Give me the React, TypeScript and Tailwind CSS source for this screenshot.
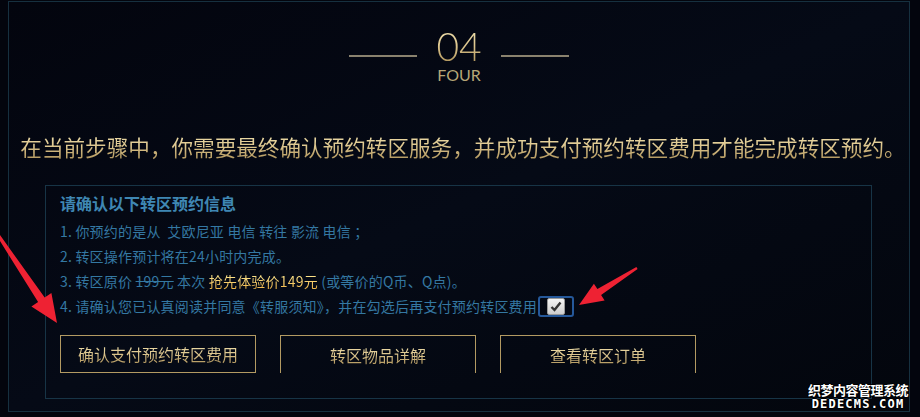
function arrow(x1: number, y1: number, x2: number, y2: number, tail: number, shaft: number, headLen: number, headW: number) {
  const dx = x2 - x1;
  const dy = y2 - y1;
  const len = Math.hypot(dx, dy);
  const ux = dx / len;
  const uy = dy / len;
  const px = -uy;
  const py = ux;
  const bx = x2 - ux * headLen;
  const by = y2 - uy * headLen;
  const pts = [
    [x1 + px * tail, y1 + py * tail],
    [bx + px * shaft, by + py * shaft],
    [bx + px * headW, by + py * headW],
    [x2, y2],
    [bx - px * headW, by - py * headW],
    [bx - px * shaft, by - py * shaft],
    [x1 - px * tail, y1 - py * tail],
  ];
  return pts.map((p) => `${p[0].toFixed(1)},${p[1].toFixed(1)}`).join(" ");
}

const gold = "bg-gradient-to-b from-[#f3e6b4] via-[#dcc58d] to-[#a98d54] bg-clip-text text-transparent";

export default function App() {
  return (
    <div
      className="relative w-[920px] h-[417px] overflow-hidden bg-[#03050d]"
      style={{ fontFamily: '"Noto Sans CJK SC", "Noto Sans", sans-serif' }}
    >
      <div className="ml-[8px] mt-[1px] w-[902px] h-[411px] border border-[#16303f] bg-gradient-to-br from-[#03050e] via-[#050a16] to-[#03060d]">
        {/* step heading */}
        <div className="flex justify-center items-start gap-[19px] pt-[24px]">
          <div className="w-[68px] h-[2px] bg-[#8a826e] mt-[29px]" />
          <div className="flex flex-col items-center">
            <div className={`text-[39px] leading-[40px] font-light ${gold}`} style={{ fontFamily: "Lato, sans-serif" }}>
              04
            </div>
            <div className="text-[16px] leading-[18px] text-[#b6a677]" style={{ fontFamily: "Lato, sans-serif" }}>
              FOUR
            </div>
          </div>
          <div className="w-[68px] h-[2px] bg-[#8a826e] mt-[29px]" />
        </div>

        <div className="mt-[48px] pl-[8px] text-center whitespace-nowrap">
          <span className={`text-[21.6px] leading-[30px] ${gold}`}>
            在当前步骤中，你需要最终确认预约转区服务，并成功支付预约转区费用才能完成转区预约。
          </span>
        </div>

        {/* info box */}
        <div className="ml-[36px] mt-[23px] w-[827px] h-[214px] border border-[#173446] pl-[14px] pt-[5px]">
          <div className="text-[16px] leading-[24px] font-bold text-[#3f87b3]">请确认以下转区预约信息</div>
          <div className="mt-[4px] text-[14px] leading-[25px] tracking-[0.2px] text-[#3478a2]">
            <div>1. 你预约的是从&nbsp;&nbsp;艾欧尼亚 电信 转往 影流 电信 ；</div>
            <div>2. 转区操作预计将在24小时内完成。</div>
            <div>
              3. 转区原价 <span className="line-through">199元</span> 本次{" "}
              <span className="bg-gradient-to-b from-[#fff3a0] to-[#f0b13c] bg-clip-text text-transparent">抢先体验价149元</span>{" "}
              (或等价的Q币、Q点)。
            </div>
            <div className="flex items-center">
              <span>4. 请确认您已认真阅读并同意《转服须知》，并在勾选后再支付预约转区费用</span>
              <span className="ml-[1px] inline-flex items-center justify-center w-[36px] h-[21px] border-2 border-[#25589a] rounded-[3px]">
                <span className="flex items-center justify-center w-[18px] h-[17px] rounded-[2px] bg-gradient-to-b from-[#f4f4f4] to-[#cfcfcf] border border-[#9a9a9a]">
                  <svg width="12" height="11" viewBox="0 0 12 11">
                    <path d="M1.5 6 L4.5 9 L10.5 1.5" fill="none" stroke="#333" strokeWidth="2.4" />
                  </svg>
                </span>
              </span>
            </div>
          </div>

          <div className="mt-[16px] flex gap-[24px]">
            <div className="w-[196px] h-[38px] border border-[#b39a62] flex items-center justify-center">
              <span className={`text-[16px] ${gold}`}>确认支付预约转区费用</span>
            </div>
            <div className="w-[196px] h-[38px] border-t border-x border-[#b39a62] flex items-center justify-center">
              <span className={`text-[16px] ${gold}`}>转区物品详解</span>
            </div>
            <div className="w-[196px] h-[38px] border-t border-x border-[#b39a62] flex items-center justify-center">
              <span className={`text-[16px] ${gold}`}>查看转区订单</span>
            </div>
          </div>
        </div>
      </div>

      {/* red arrows */}
      <svg className="absolute left-0 top-0 pointer-events-none" width="920" height="417">
        <polygon points={arrow(-4, 232, 57, 323, 1.5, 4, 28, 12)} fill="#ee2233" />
        <polygon points={arrow(637, 268, 579, 305, 1.2, 3.5, 24, 10)} fill="#ee2233" />
      </svg>

      {/* watermark */}
      <div className="absolute right-[12px] bottom-[6px] flex flex-col items-center text-white font-bold leading-none"
        style={{ textShadow: "1px 0 #000, -1px 0 #000, 0 1px #000, 0 -1px #000" }}>
        <div className="text-[13px] leading-[15px] tracking-[-0.5px]">织梦内容管理系统</div>
        <div className="text-[12px] leading-[13px] tracking-[1.2px] mt-[1px]" style={{ fontFamily: '"DejaVu Sans Mono", monospace' }}>DEDECMS.COM</div>
      </div>
    </div>
  );
}
